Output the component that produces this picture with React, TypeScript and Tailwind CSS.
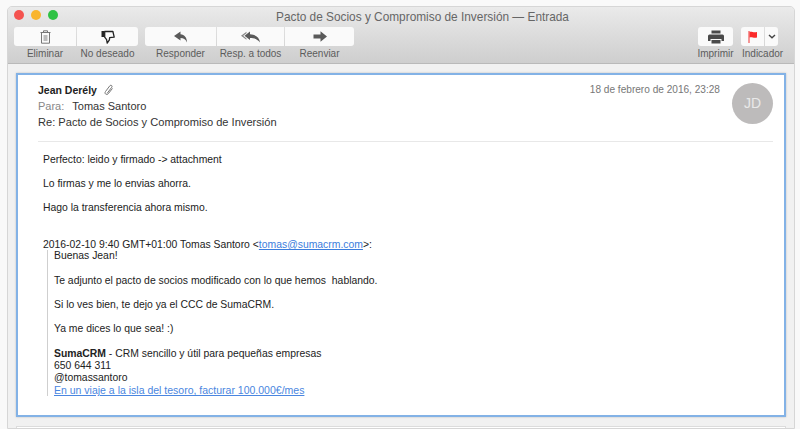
import React from 'react';

const ToolLabel = ({ children, className = '' }: { children: React.ReactNode; className?: string }) => (
  <span className={`text-[10px] leading-[12px] text-[#5c5c5c] whitespace-nowrap ${className}`}>{children}</span>
);

const ToolButton = ({ children, className = '' }: { children: React.ReactNode; className?: string }) => (
  <div className={`h-[19px] flex items-center justify-center bg-[#fafafa] ${className}`}>{children}</div>
);

const Trash = () => (
  <svg width="11" height="14" viewBox="0 0 11 14" fill="none" stroke="#777" strokeWidth="1">
    <path d="M3.500 2V.8h4V2M.5 2.500h10M1.500 2.500v10.700h8V2.500" />
    <rect x="3.500" y="5" width="4" height="6" fill="#bbb" stroke="none" />
  </svg>
);

const ThumbDown = () => (
  <svg width="14" height="14" viewBox="0 0 14 14" fill="none">
    <path d="M.5 1h3v6h-3z" fill="#222" />
    <path d="M3.700 1.500h8.200l1.300 5.700-4.600.5-.2 2.200-2.200 3.200-.6-3.400-1.900-2.500z" fill="#fafafa" stroke="#222" strokeWidth="1.300" strokeLinejoin="round" />
  </svg>
);

const Reply = () => (
  <svg width="14" height="12" viewBox="0 0 14 12" fill="#5a5a5a">
    <path d="M6.500.5 0 5l6.500 4.500V7c3 0 5 1 6.500 4.500C13 6.500 10.500 3.500 6.500 3.200z" />
  </svg>
);

const ReplyAll = () => (
  <svg width="20" height="12" viewBox="0 0 20 12">
    <path d="M5.500.8 0 4.800l5.500 4V7.400L2.200 4.800 5.500 2.200z" fill="#888" />
    <path d="M9 .5 3.500 4.800 9 9V7c4 0 7.500 1 10 4.500C18.500 6.500 14.500 3.500 9 3.200z" fill="#5a5a5a" />
  </svg>
);

const Forward = () => (
  <svg width="14" height="11" viewBox="0 0 14 11" fill="#5a5a5a">
    <path d="M7.500.3 14 5.500l-6.500 5.200V7.500H.5v-4h7z" />
  </svg>
);

const Printer = () => (
  <svg width="16" height="14" viewBox="0 0 16 14" fill="#4a4a4a">
    <path d="M3.500.5h9v3h-9z" />
    <path d="M1.500 4.500h13A1.500 1.500 0 0 1 16 6v5h-2.500V9h-11v2H0V6a1.500 1.500 0 0 1 1.500-1.500z" />
    <path d="M3.500 10h9v3.500h-9z" />
  </svg>
);

const Flag = () => (
  <svg width="10" height="12" viewBox="0 0 10 12">
    <path d="M.5 0h1v12h-1z" fill="#e33" />
    <path d="M1.500.8c2.500-.6 3.500 1 7.500.2v5.500c-3.500.8-5-.8-7.500 0z" fill="#fb2a2a" />
  </svg>
);

const Chevron = () => (
  <svg width="8" height="5" viewBox="0 0 8 5" fill="none" stroke="#444" strokeWidth="1.400">
    <path d="m1 1 3 2.800L7 1" />
  </svg>
);

const Clip = () => (
  <svg width="10" height="12" viewBox="0 0 10 12" fill="none" stroke="#777" strokeWidth="1">
    <path d="M3 9.500 7.800 3.200c1-1.300-.8-2.800-1.900-1.500L1.500 7.500c-1.600 2.100 1.200 4.200 2.800 2.200l4.200-5.300" />
  </svg>
);

const App = () => {
  return (
    <div className="w-[800px] h-[429px] overflow-hidden bg-[#f9f9f9] pt-[6px] pl-[7px] pr-[5px] font-['Liberation_Sans',Arial,sans-serif]">
      <div className="h-[423px] border border-[#d6d6d6] rounded-t-[5px] bg-[#f1f1f1] overflow-hidden">
        <div className="h-[57px] bg-gradient-to-b from-[#eaeaea] to-[#cecece] border-b border-[#b9b9b9]">
          <div className="relative h-[20px] flex items-center justify-center pl-[43px]">
            <div className="absolute left-[6px] top-[3px] flex gap-[7px]">
              <div className="w-[10px] h-[10px] rounded-full bg-[#f4534f]" />
              <div className="w-[10px] h-[10px] rounded-full bg-[#f9b52e]" />
              <div className="w-[10px] h-[10px] rounded-full bg-[#2fc244]" />
            </div>
            <span className="text-[11.850px] leading-none text-[#666] pt-[1px]">
              Pacto de Socios y Compromiso de Inversión — Entrada
            </span>
          </div>

          <div className="flex pl-[6px] pr-[9px] justify-between">
            <div className="flex gap-[7px]">
              <div className="flex flex-col">
                <div className="flex rounded-[3px] overflow-hidden gap-px">
                  <ToolButton className="w-[62px]"><Trash /></ToolButton>
                  <ToolButton className="w-[61px]"><ThumbDown /></ToolButton>
                </div>
                <div className="flex gap-px mt-[2px]">
                  <ToolLabel className="w-[62px] text-center">Eliminar</ToolLabel>
                  <ToolLabel className="w-[61px] text-center">No deseado</ToolLabel>
                </div>
              </div>
              <div className="flex flex-col">
                <div className="flex rounded-[3px] overflow-hidden gap-px">
                  <ToolButton className="w-[71px]"><Reply /></ToolButton>
                  <ToolButton className="w-[67px]"><ReplyAll /></ToolButton>
                  <ToolButton className="w-[69px]"><Forward /></ToolButton>
                </div>
                <div className="flex gap-px mt-[2px]">
                  <ToolLabel className="w-[71px] text-center">Responder</ToolLabel>
                  <ToolLabel className="w-[67px] text-center">Resp. a todos</ToolLabel>
                  <ToolLabel className="w-[69px] text-center">Reenviar</ToolLabel>
                </div>
              </div>
            </div>
            <div className="flex gap-[8px]">
              <div className="flex flex-col items-center w-[37px]">
                <ToolButton className="w-[35px] rounded-[3px]"><Printer /></ToolButton>
                <ToolLabel className="mt-[2px] text-[10.300px]">Imprimir</ToolLabel>
              </div>
              <div className="flex flex-col items-start w-[43px]">
                <div className="flex rounded-[3px] overflow-hidden gap-px -ml-[1px]">
                  <ToolButton className="w-[23px]"><Flag /></ToolButton>
                  <ToolButton className="w-[13px]"><Chevron /></ToolButton>
                </div>
                <ToolLabel className="mt-[2px] text-[10.400px]">Indicador</ToolLabel>
              </div>
            </div>
          </div>
        </div>

        <div className="pt-[9px] px-[8px]">
          <div className="h-[344px] bg-white border-2 border-[#83b2e6] shadow-[0_0_2px_rgba(0,0,0,0.2)] pt-[7px] pl-[20px] pr-[11px]">
            <div className="flex justify-between border-b border-[#e8e8e8] h-[60px]">
              <div className="text-[11px] leading-[16px] text-[#333]">
                <div className="flex items-center gap-[7px]">
                  <span className="font-bold text-[10.500px] text-[#222]">Jean Derély</span>
                  <Clip />
                </div>
                <div><span className="text-[#888] mr-[8px]">Para:</span>Tomas Santoro</div>
                <div className="text-[11.100px]">Re: Pacto de Socios y Compromiso de Inversión</div>
              </div>
              <div className="flex gap-[12px]">
                <span className="text-[10.100px] leading-[16px] text-[#777]">18 de febrero de 2016, 23:28</span>
                <div className="w-[41px] h-[41px] mt-[1px] rounded-full bg-[#bdbbbb] flex items-center justify-center text-[14px] text-[#e9e9e9]">JD</div>
              </div>
            </div>

            <div className="pl-[5px] pt-[12px] text-[10.400px] leading-[12px] text-[#222]">
              <p>Perfecto: leido y firmado -&gt; attachment</p>
              <p className="mt-[12px]">Lo firmas y me lo envias ahorra.</p>
              <p className="mt-[12px]">Hago la transferencia ahora mismo.</p>
              <p className="mt-[25px]">
                2016-02-10 9:40 GMT+01:00 Tomas Santoro &lt;<span className="text-[#3b7ddd] underline">tomas@sumacrm.com</span>&gt;:
              </p>
              <div className="ml-[4px] -mt-[1px] border-l border-[#cfcfcf] pl-[6px]">
                <p>Buenas Jean!</p>
                <p className="mt-[13px]">Te adjunto el pacto de socios modificado con lo que hemos&nbsp; hablando.</p>
                <p className="mt-[12px]">Si lo ves bien, te dejo ya el CCC de SumaCRM.</p>
                <p className="mt-[12px]">Ya me dices lo que sea! :)</p>
                <p className="mt-[13px]"><b>SumaCRM</b> - CRM sencillo y útil para pequeñas empresas</p>
                <p>650 644 311</p>
                <p>@tomassantoro</p>
                <p className="text-[10.500px] text-[#4a86e0] underline">En un viaje a la isla del tesoro, facturar 100.000€/mes</p>
              </div>
            </div>
          </div>
          <div className="mt-[9px] h-[10px] bg-white border border-[#dcdcdc]" />
        </div>
      </div>
    </div>
  );
};

export default App;
